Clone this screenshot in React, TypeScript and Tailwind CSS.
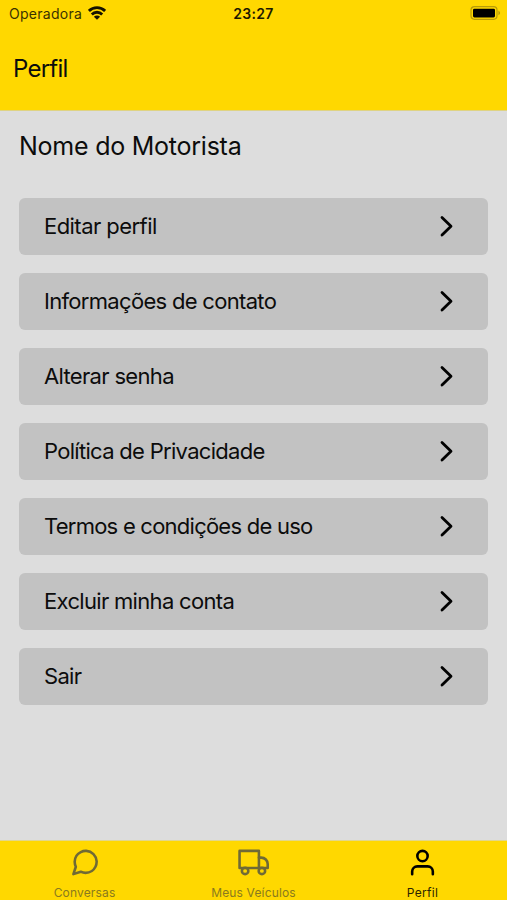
const items = [
  { label: 'Editar perfil', tracking: 'tracking-[-0.55px]' },
  { label: 'Informações de contato', tracking: 'tracking-[-0.69px]' },
  { label: 'Alterar senha', tracking: 'tracking-[-0.67px]' },
  { label: 'Política de Privacidade', tracking: 'tracking-[-0.7px]' },
  { label: 'Termos e condições de uso', tracking: 'tracking-[-0.76px]' },
  { label: 'Excluir minha conta', tracking: 'tracking-[-0.68px]' },
  { label: 'Sair', tracking: 'tracking-[-0.7px]' },
];

function WifiIcon() {
  return (
    <svg className="ml-[6px] mt-[6px] h-[14px] w-[18px]" viewBox="0 0 18 14" fill="none" stroke="#161300" strokeWidth="2.8">
      <path d="M0.9 4.9a11.5 11.5 0 0 1 16.2 0" />
      <path d="M3.8 8.4a7.4 7.4 0 0 1 10.4 0" />
      <path d="M9 13.8 5.9 10.7a4.4 4.4 0 0 1 6.2 0z" fill="#161300" stroke="none" />
    </svg>
  );
}

function BatteryIcon() {
  return (
    <svg className="mt-[6px] h-[14px] w-[31px]" viewBox="0 0 31 14">
      <rect x="1" y="0.7" width="26" height="12.6" rx="3.5" fill="none" stroke="#b89c08" strokeWidth="1.2" />
      <rect x="3" y="2.7" width="22" height="8.8" rx="1.4" fill="#000" />
      <path d="M28.4 4.8v4.4c1-.4 1.7-1.2 1.7-2.2s-.7-1.8-1.7-2.2z" fill="#b89c08" />
    </svg>
  );
}

function Chevron() {
  return (
    <svg className="h-[22px] w-[14px]" viewBox="0 0 14 22" fill="none" stroke="#000" strokeWidth="2.8" strokeLinecap="round" strokeLinejoin="round">
      <path d="M2 2.4 11 11.2l-9 8.8" />
    </svg>
  );
}

const iconProps = {
  className: 'h-[31px] w-[31px]',
  viewBox: '0 0 24 24',
  fill: 'none',
  stroke: 'currentColor',
  strokeWidth: 2,
  strokeLinecap: 'round' as const,
  strokeLinejoin: 'round' as const,
};

export default function App() {
  return (
    <div className="flex h-[900px] w-[507px] flex-col overflow-hidden bg-[#dddddd] font-['Inter','Liberation_Sans',sans-serif] text-[#0c0c0c]">
      <header className="flex h-[111px] shrink-0 flex-col border-b border-[#dfd382] bg-[#ffd800]">
        <div className="grid h-[27px] grid-cols-3">
          <div className="flex pl-[9px]">
            <span className="text-[14px] leading-[27px] tracking-[0.28px] text-[#3a3200]">Operadora</span>
            <WifiIcon />
          </div>
          <span className="text-center text-[14px] font-semibold leading-[27px] tracking-[0.3px] text-[#1c1800]">23:27</span>
          <div className="flex justify-end pr-[6px]">
            <BatteryIcon />
          </div>
        </div>
        <h1 className="ml-[13px] flex h-[84px] items-center text-[24px] tracking-[-0.75px]">Perfil</h1>
      </header>

      <main className="flex-1 px-[19px]">
        <h2 className="h-[87px] pt-[17px] text-[25px] leading-[36px] tracking-[-0.24px]">Nome do Motorista</h2>
        <div className="flex flex-col gap-[18.5px]">
          {items.map((item) => (
            <button key={item.label} className="flex h-[56.5px] items-center justify-between rounded-[6px] bg-[#c2c2c2] pl-[25px] pr-[34.5px]">
              <span className={`whitespace-nowrap text-[22px] leading-[30px] ${item.tracking}`}>{item.label}</span>
              <Chevron />
            </button>
          ))}
        </div>
      </main>

      <nav className="grid h-[60px] shrink-0 grid-cols-3 border-t border-[#e2d78a] bg-[#ffd800]">
        <div className="flex flex-col items-center pt-[6px] text-[#706a35]">
          <svg {...iconProps}>
            <path d="M21.4 11.5a8.38 8.38 0 0 1-.9 3.8 8.5 8.5 0 0 1-7.6 4.7 8.38 8.38 0 0 1-3.8-.9L3.4 21l1.9-5.7a8.38 8.38 0 0 1-.9-3.8 8.5 8.5 0 0 1 4.7-7.6 8.38 8.38 0 0 1 3.8-.9h.5a8.48 8.48 0 0 1 8 8v.5z" />
          </svg>
          <span className="mt-[7px] text-[12px] leading-[16px] tracking-[0.16px] text-[#8a7a1e]">Conversas</span>
        </div>
        <div className="flex flex-col items-center pt-[6px] text-[#706a35]">
          <svg {...iconProps}>
            <path d="M1.2 3h15v13.2h-15z" />
            <path d="M16.2 8.2h1.8a5 5 0 0 1 5 5v3h-6.8" />
            <circle cx="5.5" cy="18.5" r="2.5" />
            <circle cx="18.5" cy="18.5" r="2.5" />
          </svg>
          <span className="mt-[7px] text-[12px] leading-[16px] tracking-[0.16px] text-[#8a7a1e]">Meus Veículos</span>
        </div>
        <div className="flex flex-col items-center pt-[6px] text-black">
          <svg {...iconProps}>
            <path d="M20 21v-2a4 4 0 0 0-4-4H8a4 4 0 0 0-4 4v2" />
            <circle cx="12" cy="7" r="4" />
          </svg>
          <span className="mt-[7px] text-[12px] leading-[16px] tracking-[0.3px] text-[#2a2400]">Perfil</span>
        </div>
      </nav>
    </div>
  );
}
